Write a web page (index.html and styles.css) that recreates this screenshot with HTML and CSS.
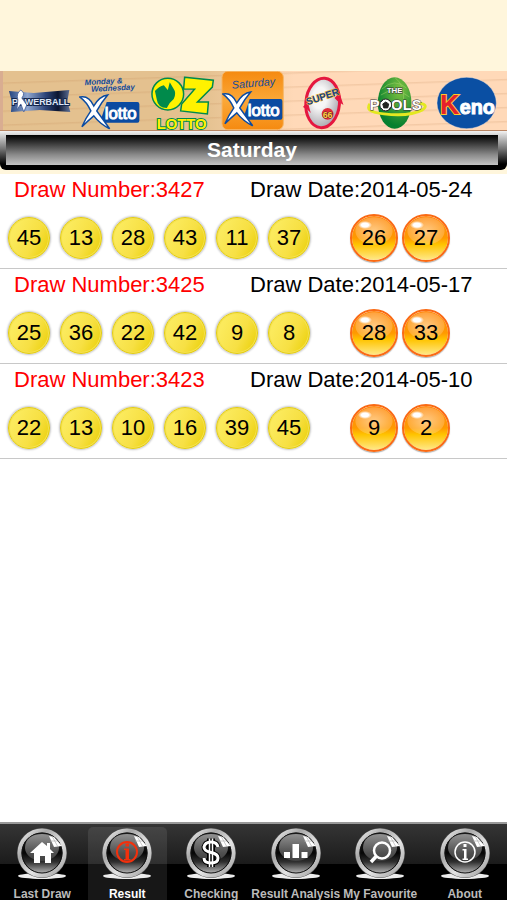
FILE: index.html
```
<!DOCTYPE html>
<html lang="en">
<head>
    <meta charset="UTF-8">
    <meta name="viewport" content="width=device-width, initial-scale=1.0">
    <title>Lotto Results</title>
    <link rel="stylesheet" href="styles.css">
</head>
<body>
    <!-- Shared shapes -->
    <svg class="defs" width="0" height="0" aria-hidden="true">
        <defs>
            <linearGradient id="ring" x1="0" y1="0" x2="1" y2="1">
                <stop offset="0" stop-color="#f4f4f4"/>
                <stop offset="0.3" stop-color="#a8a8a8"/>
                <stop offset="0.6" stop-color="#e4e4e4"/>
                <stop offset="1" stop-color="#9c9c9c"/>
            </linearGradient>
            <linearGradient id="glass" x1="0" y1="0" x2="0" y2="1">
                <stop offset="0" stop-color="#303030"/>
                <stop offset="0.5" stop-color="#050505"/>
                <stop offset="0.7" stop-color="#303030"/>
                <stop offset="1" stop-color="#d0d0d0"/>
            </linearGradient>
            <linearGradient id="shine" x1="0" y1="0" x2="0" y2="1">
                <stop offset="0" stop-color="#b4b4b4"/>
                <stop offset="1" stop-color="#484848"/>
            </linearGradient>
            <linearGradient id="chrome" x1="0" y1="0" x2="1" y2="0">
                <stop offset="0" stop-color="#24457f"/>
                <stop offset="0.3" stop-color="#8fa6cf"/>
                <stop offset="0.6" stop-color="#2c4478"/>
                <stop offset="0.8" stop-color="#0b1530"/>
                <stop offset="1" stop-color="#5f7299"/>
            </linearGradient>
            <linearGradient id="orange" x1="0" y1="0" x2="0" y2="1">
                <stop offset="0" stop-color="#f58a10"/>
                <stop offset="0.5" stop-color="#fba838"/>
                <stop offset="1" stop-color="#f58a10"/>
            </linearGradient>
            <radialGradient id="pearl" cx="0.4" cy="0.4" r="0.7">
                <stop offset="0.3" stop-color="#f6f6f6"/>
                <stop offset="1" stop-color="#9d9aa2"/>
            </radialGradient>
            <radialGradient id="leaf" cx="0.65" cy="0.25" r="0.7">
                <stop offset="0" stop-color="#7fc241"/>
                <stop offset="1" stop-color="#06802f"/>
            </radialGradient>
            <symbol id="orb" viewBox="0 0 60 60">
                <ellipse cx="30" cy="52" rx="24" ry="3" fill="#ededed"/>
                <circle cx="30" cy="29" r="25" fill="#555"/>
                <circle cx="30" cy="29" r="22.5" fill="url(#glass)" stroke="url(#ring)" stroke-width="4"/>
                <circle cx="30" cy="29" r="20" fill="none" stroke="#111" stroke-width="1"/>
                <path d="M13 24C13 14 21 10 30 10S47 14 47 24C47 31 39 37 30 37S13 31 13 24Z" fill="url(#shine)" opacity="0.75"/>
                <path d="M37 12L42 13 50 22 42 23Z" fill="#fff"/>
                <path d="M40 12L46 23M38 17L47 17" stroke="#aaa" stroke-width="0.6"/>
            </symbol>
            <symbol id="xlotto" viewBox="0 0 62 36">
                <path d="M28 8H59Q61 8 61 10V27Q61 29 59 29H21Z" fill="#0b4ba1"/>
                <path d="M1 3Q10 1 15 12Q21 2 29 1Q23 8 18 17L31 35Q21 30 15 22Q9 27 3 33Q7 24 12 17Q8 8 1 3Z" fill="#fff" stroke="#0b4ba1" stroke-width="1.5"/>
                <text x="26" y="25" class="lotto-word">lotto</text>
            </symbol>
        </defs>
    </svg>

    <header>
        <nav class="games" aria-label="Games">
            <button type="button" aria-label="Powerball">
                <svg viewBox="0 0 72 60">
                    <path d="M5 20L30 22 66 19 64 30 67 41 36 39 7 41 8 31Z" fill="url(#chrome)"/>
                    <text x="37" y="34" class="powerball">POWERBALL</text>
                    <path d="M17 19Q22 22 18 27L23 34 20 41 17 33 13 39 14 29Q12 22 17 19" fill="#fff" stroke="#3b5893" stroke-width="0.8"/>
                </svg>
            </button>
            <button type="button" aria-label="Monday and Wednesday X Lotto">
                <svg viewBox="0 0 72 60">
                    <g transform="rotate(-3 30 14)">
                        <text x="10" y="13" class="script small">Monday &amp;</text>
                        <text x="16" y="20" class="script small">Wednesday</text>
                    </g>
                    <use href="#xlotto" x="4" y="23" width="62" height="36"/>
                </svg>
            </button>
            <button type="button" aria-label="Oz Lotto">
                <svg viewBox="0 0 72 60">
                    <circle cx="21" cy="23" r="16" fill="#fff200" stroke="#008a4b" stroke-width="1.5"/>
                    <path d="M8 20Q12 15 17 14L21 19 23 11 27 18Q30 22 27 28Q22 32 20 37Q11 37 10 29Z" fill="#008a4b"/>
                    <path d="M38 6L67 9 66 16 51 31H62L61 43L34 40L35 33 48 18H37Z" fill="#fff200" stroke="#008a4b" stroke-width="1.5"/>
                    <text x="35" y="58" class="oz-word">LOTTO</text>
                </svg>
            </button>
            <button type="button" aria-label="Saturday X Lotto" aria-current="true">
                <svg viewBox="0 0 72 60">
                    <rect x="4" y="0" width="62" height="59" rx="6" fill="url(#orange)" stroke="#f6b769"/>
                    <g transform="rotate(-5 33 14)">
                        <text x="14" y="16" class="script">Saturday</text>
                    </g>
                    <use href="#xlotto" x="4" y="20" width="62" height="36"/>
                </svg>
            </button>
            <button type="button" aria-label="Super 66">
                <svg viewBox="0 0 72 60">
                    <g transform="rotate(5 34 32)">
                        <ellipse cx="34" cy="32" rx="17" ry="25" fill="url(#pearl)" stroke="#e5173f" stroke-width="3"/>
                    </g>
                    <path d="M14 36L19 31 22 42 18 38ZM46 27L51 22 55 34 49 30Z" fill="#e5173f"/>
                    <g transform="rotate(-18 34 26)">
                        <text x="34" y="29" class="super">SUPER</text>
                    </g>
                    <circle cx="39" cy="43" r="6" fill="#e02c36"/>
                    <text x="39" y="47" class="sixty">66</text>
                </svg>
            </button>
            <button type="button" aria-label="The Pools">
                <svg viewBox="0 0 72 60">
                    <ellipse cx="35" cy="32" rx="17" ry="26" fill="url(#leaf)"/>
                    <path d="M22 18Q35 6 47 17M21 24Q35 14 50 26M35 6Q45 14 44 28" fill="none" stroke="#a6d36c" stroke-width="0.5"/>
                    <path d="M10 33Q4 41 24 43Q50 46 63 39Q70 34 60 32" fill="none" stroke="#e4e820" stroke-width="3"/>
                    <text x="35" y="22" class="the">THE</text>
                    <text x="36" y="39" class="pools">POOLS</text>
                    <circle cx="26" cy="34" r="6" fill="#fff" stroke="#222"/>
                    <path d="M26 31L29 33 28 37H24L23 33ZM21 31L23 29M29 29L31 31M21 37L23 39M29 39L31 36" fill="#222" stroke="#222"/>
                </svg>
            </button>
            <button type="button" aria-label="Keno">
                <svg viewBox="0 0 72 60">
                    <ellipse cx="35" cy="32" rx="30" ry="26" fill="#0a4fa3" stroke="#f5e3d6" stroke-width="0.5"/>
                    <text x="8" y="43" class="keno-k">K</text>
                    <text x="28" y="43" class="keno">eno</text>
                </svg>
            </button>
        </nav>
        <div class="title-bar">
            <h1>Saturday</h1>
        </div>
    </header>

    <main>
        <section class="draw">
            <div class="info">
                <span class="number">Draw Number:3427</span>
                <span>Draw Date:2014-05-24</span>
            </div>
            <div class="balls">
                <span class="ball">45</span>
                <span class="ball">13</span>
                <span class="ball">28</span>
                <span class="ball">43</span>
                <span class="ball">11</span>
                <span class="ball">37</span>
                <div class="supps">
                    <span class="supp">26</span>
                    <span class="supp">27</span>
                </div>
            </div>
        </section>

        <section class="draw">
            <div class="info">
                <span class="number">Draw Number:3425</span>
                <span>Draw Date:2014-05-17</span>
            </div>
            <div class="balls">
                <span class="ball">25</span>
                <span class="ball">36</span>
                <span class="ball">22</span>
                <span class="ball">42</span>
                <span class="ball">9</span>
                <span class="ball">8</span>
                <div class="supps">
                    <span class="supp">28</span>
                    <span class="supp">33</span>
                </div>
            </div>
        </section>

        <section class="draw">
            <div class="info">
                <span class="number">Draw Number:3423</span>
                <span>Draw Date:2014-05-10</span>
            </div>
            <div class="balls">
                <span class="ball">22</span>
                <span class="ball">13</span>
                <span class="ball">10</span>
                <span class="ball">16</span>
                <span class="ball">39</span>
                <span class="ball">45</span>
                <div class="supps">
                    <span class="supp">9</span>
                    <span class="supp">2</span>
                </div>
            </div>
        </section>
    </main>

    <nav class="tabs" aria-label="Main">
        <a href="#last-draw">
            <svg viewBox="0 0 60 60">
                <use href="#orb"/>
                <path d="M30 18L35 22V19H38V25L42 29H39V39H33V32H28V39H22V29H18Z" fill="#fff"/>
            </svg>
            <span>Last Draw</span>
        </a>
        <a href="#result" class="active">
            <svg viewBox="0 0 60 60">
                <use href="#orb"/>
                <circle cx="30" cy="28" r="10" fill="none" stroke="#f2300c" stroke-width="2"/>
                <path d="M28.5 19.5H32V22.5H28.5ZM27 24.5H32V35H33.5V36.5H27V35H28.5V26H27Z" fill="#f2300c"/>
            </svg>
            <span>Result</span>
        </a>
        <a href="#checking">
            <svg viewBox="0 0 60 60">
                <use href="#orb"/>
                <path d="M37 23Q36 18 30 18T23 23Q23 27 30 28.5T37 34Q37 39 30 39T23 34M28.5 14.5V43M31.5 14.5V43" fill="none" stroke="#000" stroke-width="5"/>
                <path d="M37 23Q36 18 30 18T23 23Q23 27 30 28.5T37 34Q37 39 30 39T23 34" fill="none" stroke="#fff" stroke-width="3"/>
                <path d="M28.5 14.5V43M31.5 14.5V43" fill="none" stroke="#fff" stroke-width="1.5"/>
            </svg>
            <span>Checking</span>
        </a>
        <a href="#analysis">
            <svg viewBox="0 0 60 60">
                <use href="#orb"/>
                <path d="M18 28H24V34H18ZM26.5 20H33V34H26.5ZM35.5 28H41.5V34H35.5Z" fill="#fff"/>
            </svg>
            <span>Result Analysis</span>
        </a>
        <a href="#favourite">
            <svg viewBox="0 0 60 60">
                <use href="#orb"/>
                <circle cx="32" cy="26.5" r="8" fill="none" stroke="#fff" stroke-width="2.5"/>
                <path d="M26.5 32L21 38" stroke="#fff" stroke-width="3.5"/>
            </svg>
            <span>My Favourite</span>
        </a>
        <a href="#about">
            <svg viewBox="0 0 60 60">
                <use href="#orb"/>
                <circle cx="30" cy="28" r="10" fill="none" stroke="#fff" stroke-width="1.5"/>
                <path d="M28.5 20H31.5V23H28.5ZM27.5 25H31.5V34.5H33V36H27.5V34.5H29V26.5H27.5Z" fill="#fff"/>
            </svg>
            <span>About</span>
        </a>
    </nav>
</body>
</html>
```

FILE: styles.css
```
* {
    box-sizing: border-box;
}
body {
    margin: 0;
    min-height: 100vh;
    display: flex;
    flex-direction: column;
    background: #fff;
    color: #000;
    font-family: "Liberation Sans", Arial, sans-serif;
}
.defs {
    position: absolute;
}
header {
    background-color: #fff6dc;
    padding: 71px 0 4px;
}

/* game picker */
.games {
    display: grid;
    grid-template-columns: repeat(7, 1fr);
    height: 60px;
    padding: 0 4px;
    background:
        linear-gradient(to right, #d9ad91 0, #d9ad91 3px, transparent 3px),
        repeating-linear-gradient(178deg, transparent 0, transparent 11px, rgba(190, 130, 80, 0.18) 12px, transparent 14px),
        linear-gradient(to right, #e4c18f, #e4c18f 40%, #ffd9b8 58%);
    border-bottom: 1px solid #b98563;
}
.games button {
    border: none;
    padding: 0;
    background: none;
    cursor: pointer;
}
.games svg {
    display: block;
    width: 100%;
    height: 60px;
}
.powerball {
    font: bold 9px "Liberation Sans", sans-serif;
    fill: #dfe6f5;
    stroke: #14264d;
    stroke-width: 2px;
    paint-order: stroke;
    text-anchor: middle;
}
.script {
    font: italic 11px "Liberation Sans", sans-serif;
    fill: #124a9b;
    stroke: #124a9b;
    stroke-width: 0;
}
.small {
    font-size: 8px;
    font-weight: bold;
}
.lotto-word {
    font: 17px "Liberation Sans", sans-serif;
    fill: #fff;
    stroke: #fff;
    stroke-width: 1px;
}
.oz-word {
    font: bold 15px "Liberation Sans", sans-serif;
    fill: #fff200;
    stroke: #008a4b;
    stroke-width: 2px;
    paint-order: stroke;
    text-anchor: middle;
}
.super {
    font: bold 10px "Liberation Sans", sans-serif;
    fill: #17448f;
    stroke: #f5bb20;
    stroke-width: 1px;
    paint-order: stroke;
    text-anchor: middle;
}
.sixty {
    font: bold 9px "Liberation Sans", sans-serif;
    fill: #ffd23c;
    stroke: #5b1730;
    stroke-width: 1px;
    paint-order: stroke;
    text-anchor: middle;
}
.the,
.pools {
    font: bold 8px "Liberation Sans", sans-serif;
    fill: #fff;
    stroke: #333;
    stroke-width: 1px;
    paint-order: stroke;
    text-anchor: middle;
}
.pools {
    font-size: 15px;
}
.keno,
.keno-k {
    font: bold 20px "Liberation Sans", sans-serif;
    fill: #fff;
    stroke: #fff;
    stroke-width: 1px;
}
.keno-k {
    font-size: 27px;
    fill: #e5202d;
    stroke: #ffc62b;
    stroke-width: 2px;
    paint-order: stroke;
}

/* title */
.title-bar {
    height: 39px;
    padding: 4px 9px 5px 6px;
    border-radius: 0 0 6px 6px;
    background: linear-gradient(#f2f2f2, #cfcfcf 12%, #777 45%, #000 85%);
}
h1 {
    margin: 0;
    background: linear-gradient(#000, #333 25%, #888 65%, #c4c4c4);
    color: #fff;
    font-size: 21px;
    line-height: 30px;
    text-align: center;
}

/* draws */
main {
    flex: 1;
}
.draw {
    border-bottom: 1px solid #c8c8c8;
    font-size: 22px;
}
.info {
    display: grid;
    grid-template-columns: 236px 1fr;
    padding-left: 14px;
    line-height: 32px;
    white-space: nowrap;
}
.number {
    color: #f00;
}
.balls {
    display: flex;
    align-items: center;
    gap: 10px;
    padding: 8px 8px 6px;
}
.ball,
.supp {
    display: flex;
    flex: none;
    align-items: center;
    justify-content: center;
    width: 42px;
    height: 42px;
    border: 1px solid #e2cb12;
    border-radius: 50%;
    background: linear-gradient(115deg, #fbea5c 20%, #f7e044 60%, #e9ce00);
    box-shadow: inset 0 0 0 1px #f5e250, 0 0 2px 1px #c4c4c4;
}
.supps {
    display: flex;
    gap: 4px;
    margin-left: 30px;
}
.supp {
    width: 48px;
    height: 48px;
    border: 2px solid #fa6a14;
    background:
        radial-gradient(ellipse 7px 4px at 13px 9px, #fff 50%, transparent),
        radial-gradient(ellipse 19px 14px at 22px 15px, rgba(255, 255, 255, 0.5), rgba(255, 255, 255, 0.2) 95%, transparent),
        linear-gradient(#ff8a10, #ff9900 50%, #ffc400 65%, #ffe98a);
    background-origin: padding-box;
    background-clip: padding-box;
    box-shadow: 0 1px 1px #b0b0b0;
}

/* tab bar */
.tabs {
    display: grid;
    grid-template-columns: repeat(6, 1fr);
    height: 78px;
    border-top: 2px solid #999;
    background: linear-gradient(#353535, #1b1b1b 40px, #000 40px);
}
.tabs a {
    display: flex;
    flex-direction: column;
    align-items: center;
    justify-content: space-between;
    min-width: 0;
    color: #bbb;
    font-size: 12px;
    font-weight: bold;
    line-height: 12px;
    text-decoration: none;
    white-space: nowrap;
}
.tabs svg {
    width: 60px;
    height: 60px;
}
.tabs .active {
    margin: 3px 2px 0 3px;
    border-radius: 5px 5px 0 0;
    background-color: rgba(255, 255, 255, 0.09);
    color: #fff;
}
.active svg {
    margin-top: -3px;
}
```
